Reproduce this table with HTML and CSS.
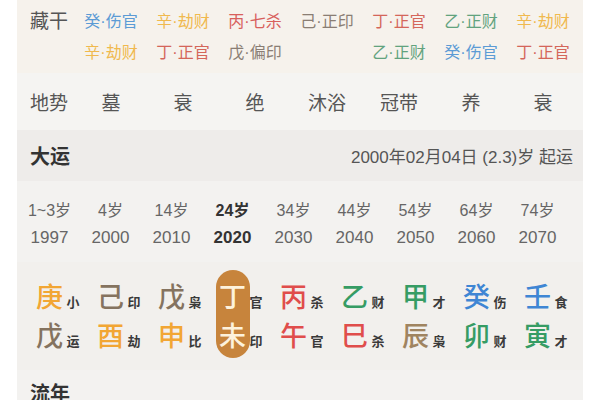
FILE: index.html
```html
<!DOCTYPE html>
<html lang="zh">
<head>
<meta charset="utf-8">
<link rel="stylesheet" href="styles.css">
</head>
<body>
<div class="panel">
  <section class="cang">
    <div class="label">藏干</div>
    <div class="cg water">癸·伤官</div>
    <div class="cg metal">辛·劫财</div>
    <div class="cg fire">丙·七杀</div>
    <div class="cg earth">己·正印</div>
    <div class="cg fire2">丁·正官</div>
    <div class="cg wood">乙·正财</div>
    <div class="cg metal">辛·劫财</div>
    <div class="label"></div>
    <div class="cg metal">辛·劫财</div>
    <div class="cg fire2">丁·正官</div>
    <div class="cg earth">戊·偏印</div>
    <div class="cg"></div>
    <div class="cg wood">乙·正财</div>
    <div class="cg water">癸·伤官</div>
    <div class="cg fire2">丁·正官</div>
  </section>

  <section class="dishi">
    <div class="label">地势</div>
    <div class="ds">墓</div>
    <div class="ds">衰</div>
    <div class="ds">绝</div>
    <div class="ds">沐浴</div>
    <div class="ds">冠带</div>
    <div class="ds">养</div>
    <div class="ds">衰</div>
  </section>

  <section class="head dayun-head">
    <div class="title">大运</div>
    <div class="start">2000年02月04日 (2.3)岁 起运</div>
  </section>

  <section class="ages">
    <div class="age">1~3岁<span>1997</span></div>
    <div class="age">4岁<span>2000</span></div>
    <div class="age">14岁<span>2010</span></div>
    <div class="age cur">24岁<span>2020</span></div>
    <div class="age">34岁<span>2030</span></div>
    <div class="age">44岁<span>2040</span></div>
    <div class="age">54岁<span>2050</span></div>
    <div class="age">64岁<span>2060</span></div>
    <div class="age">74岁<span>2070</span></div>
  </section>

  <section class="gz">
    <div class="gzc"><div class="gzr"><b class="metal">庚</b><i>小</i></div><div class="gzr"><b class="earth">戊</b><i>运</i></div></div>
    <div class="gzc"><div class="gzr"><b class="earth">己</b><i>印</i></div><div class="gzr"><b class="metal">酉</b><i>劫</i></div></div>
    <div class="gzc"><div class="gzr"><b class="earth">戊</b><i>枭</i></div><div class="gzr"><b class="metal">申</b><i>比</i></div></div>
    <div class="gzc cur"><div class="pill"></div><div class="gzr"><b>丁</b><i>官</i></div><div class="gzr"><b>未</b><i>印</i></div></div>
    <div class="gzc"><div class="gzr"><b class="fire">丙</b><i>杀</i></div><div class="gzr"><b class="fire">午</b><i>官</i></div></div>
    <div class="gzc"><div class="gzr"><b class="wood">乙</b><i>财</i></div><div class="gzr"><b class="fire">巳</b><i>杀</i></div></div>
    <div class="gzc"><div class="gzr"><b class="wood">甲</b><i>才</i></div><div class="gzr"><b class="earth2">辰</b><i>枭</i></div></div>
    <div class="gzc"><div class="gzr"><b class="water">癸</b><i>伤</i></div><div class="gzr"><b class="wood">卯</b><i>财</i></div></div>
    <div class="gzc"><div class="gzr"><b class="water">壬</b><i>食</i></div><div class="gzr"><b class="wood">寅</b><i>才</i></div></div>
  </section>

  <section class="head liunian-head">
    <div class="title">流年</div>
  </section>
</div>
</body>
</html>
```

FILE: styles.css
```css
* { box-sizing: border-box; margin: 0; padding: 0; }
html, body { background: #ffffff; }
body {
  font-family: "Liberation Sans", "Noto Sans CJK SC", sans-serif;
  color: #555;
  overflow: hidden;
  height: 400px;
}
.panel {
  margin: 0 17px;
  width: 566px;
  background: #f3f2f0;
  min-height: 400px;
}
.label {
  font-size: 19px;
  color: #555;
  padding-left: 13px;
  white-space: nowrap;
}
.cang {
  background: #f6f2ec;
  display: grid;
  grid-template-columns: 58px repeat(7, 72px);
  grid-auto-rows: 31px;
  align-items: center;
  padding: 4px 0 7px;
  height: 73px;
}
.cg {
  font-size: 16px;
  text-align: center;
  white-space: nowrap;
}
.water { color: #3f86d4; }
.metal { color: #f2a634; }
.fire { color: #e04d4b; }
.fire2 { color: #d4665a; }
.earth { color: #85735f; }
.earth2 { color: #a08460; }
.wood { color: #369c64; }
.cg.water { color: #5b9bd5; }
.cg.metal { color: #f0b94e; }
.cg.fire { color: #d8605c; }
.cg.wood { color: #62a37e; }
.cg.earth { color: #8a7e74; }

.dishi {
  background: #f5f4f2;
  display: grid;
  grid-template-columns: 58px repeat(7, 72px);
  align-items: center;
  height: 57px;
}
.ds {
  font-size: 19px;
  text-align: center;
  color: #555;
}
.head {
  display: flex;
  align-items: center;
  justify-content: space-between;
  padding: 0 10px 0 13px;
}
.dayun-head {
  background: #eeecea;
  height: 51px;
}
.title {
  font-size: 20px;
  font-weight: bold;
  color: #333;
}
.start {
  font-size: 17px;
  color: #555;
}
.ages {
  display: grid;
  grid-template-columns: repeat(9, 61px);
  padding: 16px 0 12px 2px;
  height: 81px;
}
.age {
  display: flex;
  flex-direction: column;
  align-items: center;
  font-size: 16px;
  line-height: 27px;
  color: #666;
  white-space: nowrap;
}
.age span { font-size: 17px; }
.age.cur { font-weight: bold; color: #333; }

.gz {
  display: grid;
  grid-template-columns: repeat(9, 61px);
  padding: 8px 0 0 2px;
  height: 108px;
  background: #f2f0ed;
}
.gzc {
  position: relative;
  display: flex;
  flex-direction: column;
  gap: 9px;
  padding-top: 13px;
}
.gzr {
  position: relative;
  display: flex;
  align-items: baseline;
  padding-left: 15.5px;
  height: 30px;
}
.gzr b {
  width: 30px;
  text-align: center;
  font-size: 27px;
  line-height: 30px;
  font-weight: 500;
}
.gzr i {
  font-style: normal;
  font-size: 13px;
  font-weight: bold;
  color: #3a3a3a;
  margin-left: 2px;
}
.pill {
  position: absolute;
  left: 13.5px;
  top: 0;
  width: 34px;
  height: 88px;
  border-radius: 17px;
  background: #c7843c;
}
.cur .gzr b { color: #fdf2dc; }
.liunian-head {
  height: 44px;
  align-items: flex-start;
  padding-top: 8px;
}
```
